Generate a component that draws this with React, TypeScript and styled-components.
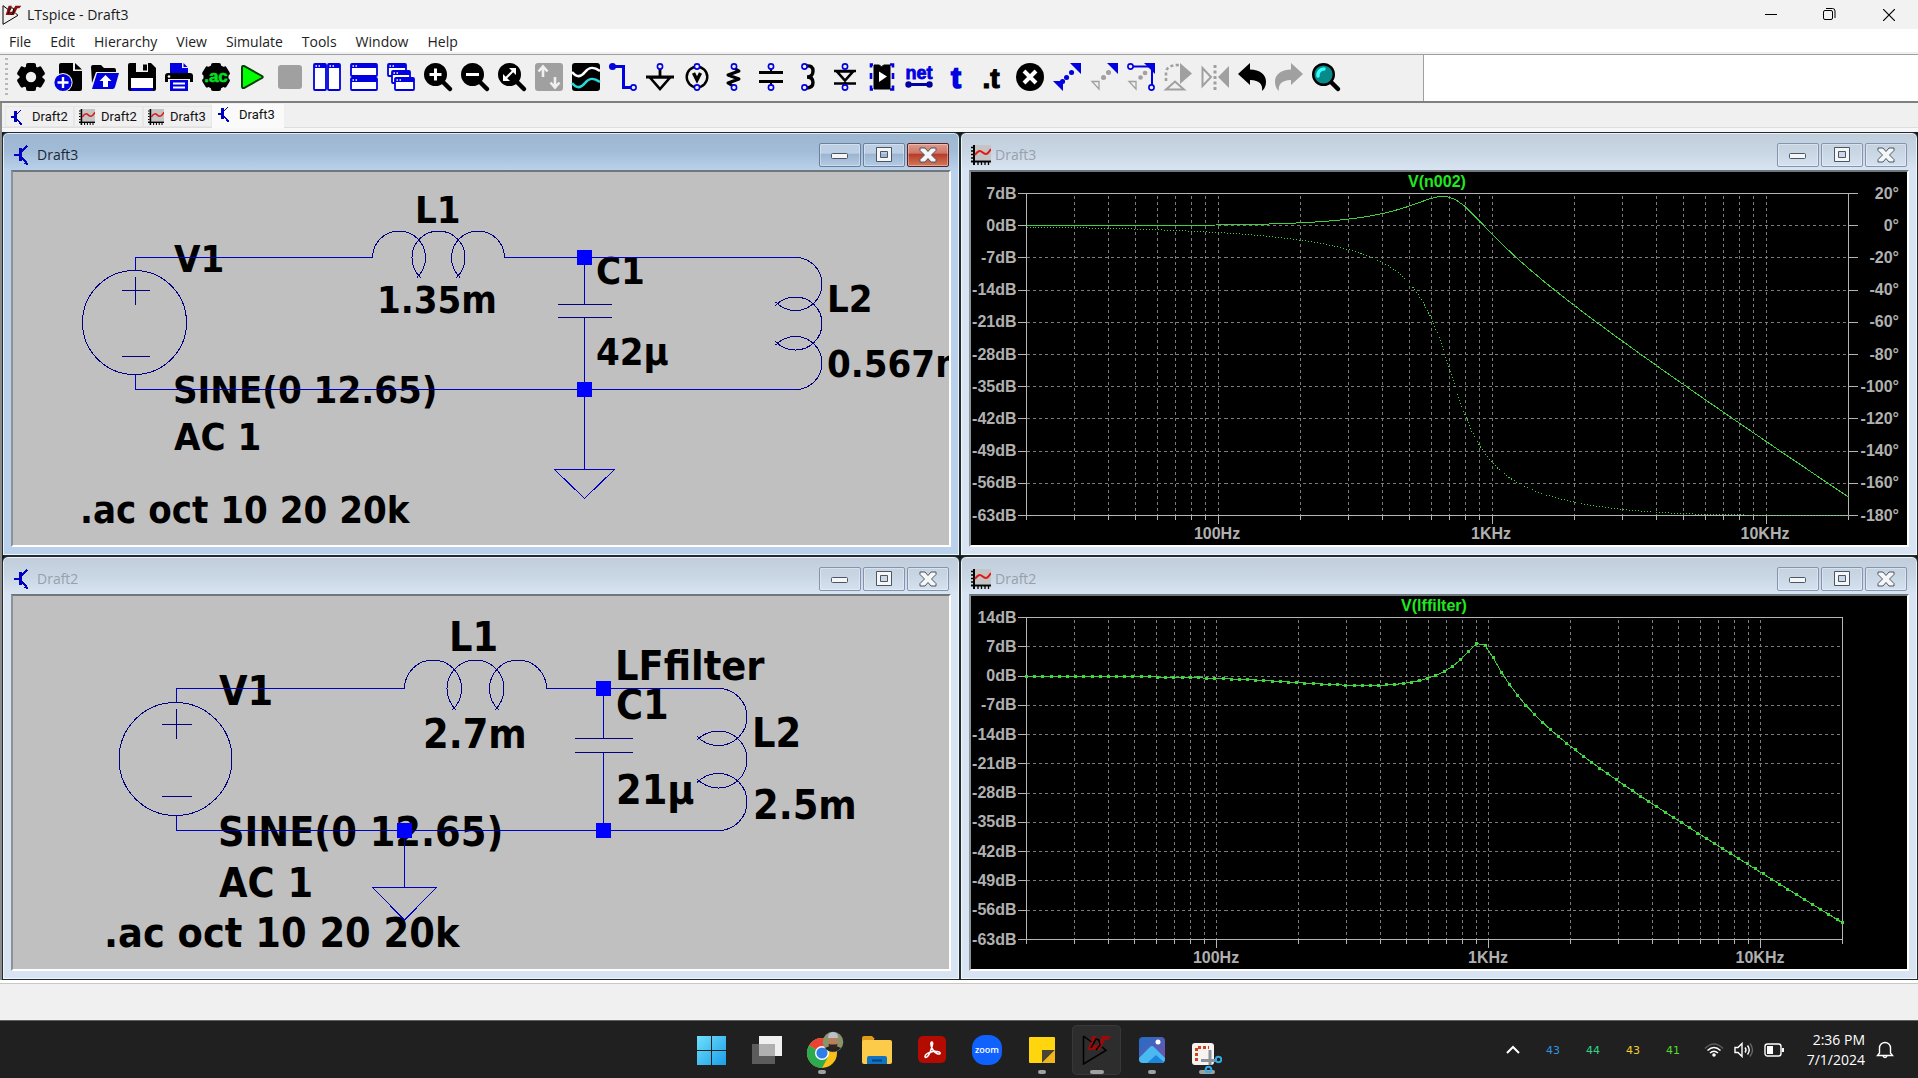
import React, { useLayoutEffect, useRef, useState } from "react";
import styled, { createGlobalStyle, css } from "styled-components";

const UI_FONT = `"Open Sans", "Noto Sans", sans-serif`;
const BLUE = "#0000e0";
const GREY = "#a0a0a0";

const GlobalStyle = createGlobalStyle`
  * { box-sizing: border-box; }
  body { margin: 0; background: #f0f0f0; font-family: ${UI_FONT}; font-size: 14px; }
  button { font: inherit; color: inherit; padding: 0; margin: 0; border: 0; background: none; }
  svg { display: block; }
`;

const Screen = styled.div`
  display: flex;
  flex-direction: column;
  min-height: 100vh;
  overflow: hidden;
`;

/* ---------- application caption and menu ---------- */

const Caption = styled.header`
  display: flex;
  align-items: center;
  height: 29px;
  padding-left: 2px;
  background: #f2f2f2;
  color: #1a1a1a;
`;

const CaptionTitle = styled.h1`
  flex: 1;
  margin: 0 0 0 5px;
  font-size: 14px;
  font-weight: 400;
  line-height: 20px;
`;

const CaptionButton = styled.button`
  display: grid;
  place-items: center;
  width: 59px;
  height: 28px;
`;

const MenuBar = styled.nav`
  display: flex;
  align-items: center;
  gap: 19px;
  height: 26px;
  padding-left: 9px;
  background: #fff;
  border-bottom: 1px solid #a0a0a0;
  box-shadow: inset 0 -2px 0 #f0f0f0;
  color: #222;
`;

const MenuItem = styled.button`
  height: 22px;
  line-height: 22px;
`;

/* ---------- toolbar ---------- */

const ToolRow = styled.div`
  display: flex;
  height: 48px;
  background: #fff;
  border-bottom: 2px solid #808080;
`;

const ToolBar = styled.div`
  display: flex;
  align-items: center;
  gap: 9px;
  padding: 0 83px 2px 5px;
  background: #f0f0f0;
  border-right: 1px solid #a0a0a0;
`;

const Grip = styled.div`
  width: 3px;
  height: 38px;
  background: repeating-linear-gradient(#b8b8b8 0 2px, transparent 2px 5px);
`;

const ToolButton = styled.button`
  width: 28px;
  height: 28px;
  svg { overflow: visible; }
`;

/* ---------- document tabs ---------- */

const TabStrip = styled.div`
  display: flex;
  align-items: flex-start;
  height: 29px;
  padding: 1px 0 0 3px;
  background: #f0f0f0;
  border-left: 2px solid #8c8c8c;
  box-shadow: inset 0 -4px 0 #f7f7f7, inset 0 -5px 0 #dedede;
  font-family: Roboto, "Open Sans", sans-serif;
  font-size: 13px;
`;

const Tab = styled.button<{ $active?: boolean }>`
  display: flex;
  align-items: center;
  gap: 6px;
  width: 69px;
  height: 21px;
  margin-top: 2px;
  padding-left: 4px;
  border: 1px solid #e6e6e6;
  color: #111;
  ${(p) =>
    p.$active &&
    css`
      width: 72px;
      height: 24px;
      margin-top: 0;
      padding-bottom: 4px;
      background: #fafafa;
      border-color: #fafafa;
    `}
`;

/* ---------- document windows ---------- */

const Workspace = styled.main`
  flex: 1;
  display: grid;
  grid-template-columns: minmax(0, 1fr) minmax(0, 1fr);
  grid-template-rows: minmax(0, 1fr) minmax(0, 1fr);
  min-height: 848px;
  padding-left: 2px;
  background: linear-gradient(90deg, #8c8c8c 0 2px, #101c1e 2px);
`;

const Frame = styled.section<{ $active?: boolean }>`
  display: flex;
  flex-direction: column;
  min-width: 0;
  padding: 0 8px 8px;
  border: 1px solid #1f2c30;
  border-radius: 6px 6px 0 0;
  box-shadow: inset 0 0 0 1px rgba(255, 255, 255, 0.7);
  background: ${(p) =>
    p.$active
      ? "linear-gradient(#9db6d1 0, #a2bbd7 18px, #b9d1ea 37px)"
      : "linear-gradient(#c1cddb 0, #c8d5e3 18px, #d8e4f1 37px)"};
`;

const FrameTitle = styled.div`
  display: flex;
  align-items: flex-start;
  gap: 2px;
  height: 37px;
  padding: 10px 2px 0 0;
`;

const FrameName = styled.h2<{ $active?: boolean }>`
  flex: 1;
  margin: 2px 0 0 2px;
  font-size: 14px;
  font-weight: 400;
  line-height: 20px;
  color: ${(p) => (p.$active ? "#1c2733" : "#98a1ab")};
`;

const FrameIcon = styled.span`
  margin: 2px 0 0 2px;
`;

const FrameButton = styled.button<{ $tone: "idle" | "active" | "danger" }>`
  display: grid;
  place-items: center;
  width: 42px;
  height: 24px;
  border: 1px solid #8494b0;
  border-radius: 2px;
  box-shadow: inset 0 0 0 1px rgba(255, 255, 255, 0.35);
  ${(p) =>
    p.$tone === "active" &&
    css`
      border-color: #6b809c;
      background: linear-gradient(#bccfe4 0 42%, #9bb5d1 46%, #b4cbe4);
    `}
  ${(p) =>
    p.$tone === "danger" &&
    css`
      border-color: #5b1f1f;
      background: linear-gradient(#dd9a8c 0, #cf7566 42%, #b83a26 46%, #d07a5c);
    `}
`;

const Client = styled.div<{ $dark?: boolean }>`
  flex: 1;
  min-height: 0;
  overflow: hidden;
  border: 2px solid #fff;
  border-top-color: #6f767c;
  border-left-color: #8b9299;
  background: ${(p) => (p.$dark ? "#000" : "#c0c0c0")};
`;

const Drawing = styled.svg`
  width: 100%;
  height: 100%;
  shape-rendering: crispEdges;
`;

const Label = styled.text`
  font-family: "DejaVu Sans Condensed", "DejaVu Sans", sans-serif;
  font-weight: 700;
  fill: #000;
`;

const AxisText = styled.text`
  font-family: "Liberation Sans", Arial, sans-serif;
  font-weight: 700;
  font-size: 16px;
  fill: #b0b0b0;
`;

const TraceName = styled(AxisText)`
  fill: #20e820;
`;

/* ---------- status bar and taskbar ---------- */

const StatusBar = styled.footer`
  height: 40px;
  background: #f0f0f0;
  border-top: 3px solid #fff;
  box-shadow: inset 0 1px 0 #c8c8c8;
`;

const TaskBar = styled.footer`
  display: grid;
  grid-template-columns: minmax(0, 1fr) auto minmax(0, 1fr);
  align-items: center;
  height: 58px;
  padding-top: 1px;
  background: #202020;
  border-top: 1px solid #606060;
  color: #fff;
`;

const Apps = styled.div`
  grid-column: 2;
  display: flex;
  gap: 6px;
`;

const AppButton = styled.button<{ $current?: boolean; $bar?: number }>`
  position: relative;
  display: grid;
  place-items: center;
  width: 49px;
  height: 50px;
  border-radius: 5px;
  background: ${(p) => (p.$current ? "#2d2d2d" : "transparent")};
  box-shadow: ${(p) => (p.$current ? "inset 0 0 0 1px #383838" : "none")};
  &::after {
    content: "";
    position: absolute;
    bottom: 1px;
    left: 50%;
    width: ${(p) => p.$bar ?? 0}px;
    height: 4px;
    border-radius: 2px;
    background: #a0a0a0;
    transform: translateX(-50%);
  }
  svg { position: relative; z-index: 1; }
`;

const Tray = styled.div`
  justify-self: end;
  display: flex;
  align-items: center;
  padding-right: 24px;
`;

const Gauges = styled.div`
  display: flex;
  gap: 26px;
  margin: 0 24px 0 26px;
  font-family: "DejaVu Sans", sans-serif;
  font-size: 11px;
`;

const Gauge = styled.span<{ $color: string }>`
  color: ${(p) => p.$color};
`;

const TrayIcons = styled.div`
  display: flex;
  align-items: center;
  gap: 10px;
`;

const Clock = styled.time`
  width: 71px;
  margin: 0 11px 0 10px;
  text-align: right;
  font-size: 14px;
  line-height: 20px;
  white-space: nowrap;
`;

/* ---------- toolbar icons, 28 x 28 ---------- */

const gearTeeth = [0, 60, 120].map((a) => (
  <rect key={a} x="9" y="0" width="10" height="28" rx="2" transform={`rotate(${a} 14 14)`} />
));

const Pin = ({ x, y }: { x: number; y: number }) => (
  <circle cx={x} cy={y} r="2.6" fill="#f0f0f0" stroke={BLUE} strokeWidth="1.6" />
);

const Lens = ({ children, fill = "#000" }: { children?: React.ReactNode; fill?: string }) => (
  <>
    <path d="M19 19 26 26" stroke="#000" strokeWidth="4.5" strokeLinecap="round" />
    <circle cx="11.5" cy="11.5" r="10.3" fill={fill} stroke="#000" strokeWidth="2.4" />
    {children}
  </>
);

const pane = (x: number, y: number, w: number, h: number) => (
  <g key={`${x}-${y}`}>
    <rect x={x + 1} y={y + 1} width={w - 2} height={h - 2} rx="1" fill="#fff" stroke={BLUE} strokeWidth="1.8" />
    <rect x={x + 1} y={y + 1} width={w - 2} height="4" fill={BLUE} />
    <path d={`M${x + 2.5} ${y + 3}h1.5M${x + 5.5} ${y + 3}h1.5`} stroke="#fff" strokeWidth="1.5" />
  </g>
);

const tools: { name: string; art: React.ReactNode }[] = [
  {
    name: "Settings",
    art: (
      <>
        <circle cx="14" cy="14" r="11.5" />
        {gearTeeth}
        <circle cx="14" cy="14" r="5.2" fill="#f0f0f0" />
      </>
    ),
  },
  {
    name: "New schematic",
    art: (
      <>
        <path d="M5 2q0-2 2-2h12v8h9v18q0 2-2 2H7q-2 0-2-2z" />
        <path d="M21 0l7 6.5h-7z" />
        <circle cx="9" cy="19.5" r="9.6" fill="#f0f0f0" />
        <circle cx="9" cy="19.5" r="8.6" fill={BLUE} />
        <path d="M9 14v11M3.500 19.500h11" stroke="#fff" strokeWidth="2.4" />
      </>
    ),
  },
  {
    name: "Open",
    art: (
      <>
        <path d="M0 4q0-2 2-2h8l3 3h10q2 0 2 2v2H5L1 20z" />
        <path d="M6 10h22l-4 14q-.5 2-2.500 2H1z" fill={BLUE} />
        <path d="M14.500 12l6 6h-3.500v6h-5v-6H8.500z" fill="#fff" />
      </>
    ),
  },
  {
    name: "Save",
    art: (
      <>
        <path d="M0 2q0-2 2-2h21l5 5v21q0 2-2 2H2q-2 0-2-2z" />
        <path d="M8 0h12v9H8z" fill="#f0f0f0" />
        <path d="M15 1.500h4v6h-4z" />
        <path d="M3 15h22v10H3z" fill="#fff" />
        <path d="M3 25h22v3H3z" fill={BLUE} />
      </>
    ),
  },
  {
    name: "Print",
    art: (
      <>
        <path d="M5 0h12v5h6v5H5z" fill={BLUE} />
        <path d="M18.500 0l4 4h-4z" fill={BLUE} />
        <path d="M0 13q0-3 3-3h22q3 0 3 3v6H0z" />
        <circle cx="4" cy="13.500" r="1.300" fill="#fff" />
        <path d="M3 16h22v3H3z" fill="#f0f0f0" />
        <path d="M5 17h18v11H5z" fill={BLUE} />
        <path d="M8 20.500h12M8 24.500h12" stroke="#fff" strokeWidth="1.800" />
      </>
    ),
  },
  {
    name: "Configure analysis",
    art: (
      <>
        <circle cx="14" cy="14" r="12.500" />
        {gearTeeth}
        <text x="14" y="19" textAnchor="middle" fontFamily="Liberation Sans" fontWeight="700" fontSize="17" fill="#00e020" stroke="#00e020" strokeWidth="0.600">
          .ac
        </text>
      </>
    ),
  },
  { name: "Run", art: <path d="M3 4.500q0-2 2-1.500l18 10q1.500 1 0 2L5 25q-2 .5-2-1.500z" fill="#0f0" stroke="#063a06" strokeWidth="2" /> },
  { name: "Stop", art: <rect x="2" y="2" width="24" height="24" rx="3" fill={GREY} /> },
  { name: "Tile vertically", art: <>{pane(0, 0, 14, 28)}{pane(14, 0, 14, 28)}</> },
  { name: "Tile horizontally", art: <>{pane(0, 0, 28, 14)}{pane(0, 14, 28, 14)}</> },
  { name: "Cascade", art: <>{pane(0, 0, 20, 14)}{pane(4, 7, 20, 14)}{pane(7, 14, 21, 14)}</> },
  { name: "Zoom in", art: <Lens><path d="M11.500 5.500v12M5.500 11.500h12" stroke="#fff" strokeWidth="3" /></Lens> },
  { name: "Zoom out", art: <Lens><path d="M5 11.500h13" stroke="#fff" strokeWidth="3" /></Lens> },
  {
    name: "Zoom to fit",
    art: (
      <Lens>
        <path d="M8 15l7-7" stroke="#fff" strokeWidth="2" />
        <path d="M11 5h7v7zM5 11v7h7z" fill="#fff" />
      </Lens>
    ),
  },
  {
    name: "Autorange",
    art: (
      <>
        <rect width="28" height="28" rx="3" fill={GREY} />
        <path d="M8 14V4M3.500 8.500 8 3.500l4.500 5M20 14v10M15.500 19.500l4.500 5 4.500-5" fill="none" stroke="#f0f0f0" strokeWidth="2.600" />
      </>
    ),
  },
  {
    name: "Plot settings",
    art: (
      <>
        <rect width="28" height="28" rx="3" />
        <path d="M0 9c5 6 9 5 13 0s8-6 15-1" fill="none" stroke="#fff" strokeWidth="2.600" />
        <path d="M0 20c5 6 9 5 13 0s8-6 15-1" fill="none" stroke="#28d8d8" strokeWidth="2.600" />
      </>
    ),
  },
  {
    name: "Wire",
    art: (
      <>
        <path d="M3 3.500h11.500v21H24" fill="none" stroke={BLUE} strokeWidth="3" />
        <circle cx="3.500" cy="3.500" r="3.500" fill={BLUE} />
        <Pin x={24.500} y={24.500} />
      </>
    ),
  },
  {
    name: "Ground",
    art: (
      <>
        <path d="M0 14h28M14 4v10" stroke="#000" strokeWidth="2.800" />
        <path d="M4 14.500h20L14 26z" fill="#f0f0f0" stroke="#000" strokeWidth="2.600" />
        <Pin x={14} y={3.500} />
      </>
    ),
  },
  {
    name: "Voltage source",
    art: (
      <>
        <circle cx="14" cy="14" r="10.300" fill="none" stroke="#000" strokeWidth="2.400" />
        <path d="M10.500 10l3.500 7 3.500-7" fill="none" stroke="#000" strokeWidth="3.400" />
        <Pin x={14} y={3.500} />
        <Pin x={14} y={24.500} />
      </>
    ),
  },
  {
    name: "Resistor",
    art: (
      <>
        <path d="M14 5l5 3-11 4 11 4-11 4 5 3" fill="none" stroke="#000" strokeWidth="3" strokeLinejoin="round" />
        <Pin x={14} y={3.500} />
        <Pin x={14} y={24.500} />
      </>
    ),
  },
  {
    name: "Capacitor",
    art: (
      <>
        <path d="M14 4v5M14 19v5" stroke="#000" strokeWidth="2" />
        <path d="M2 9.500h24M2 18.500h24" stroke="#000" strokeWidth="3" />
        <Pin x={14} y={3.500} />
        <Pin x={14} y={24.500} />
      </>
    ),
  },
  {
    name: "Inductor",
    art: (
      <>
        <path d="M12 3q7-1 7 5t-6 6q6 0 6 5.500T12 25" fill="none" stroke="#000" strokeWidth="3.400" />
        <Pin x={10.500} y={3.500} />
        <Pin x={10.500} y={24.500} />
      </>
    ),
  },
  {
    name: "Diode",
    art: (
      <>
        <path d="M3 8h22M3 20.500h22M14 19v5" stroke="#000" strokeWidth="2.600" />
        <path d="M6 8.500h16l-8 9z" fill="#f0f0f0" stroke="#000" strokeWidth="2.600" />
        <Pin x={14} y={3.500} />
        <Pin x={14} y={24.500} />
      </>
    ),
  },
  {
    name: "Component",
    art: (
      <>
        <path d="M6 2h5q2.500 3 5 0h6v24H6z" stroke="#000" strokeWidth="1" />
        <path d="M11 8.500l8 5-8 5.500z" fill="#fff" />
        <path d="M5 1.500H3v3M3 10v6M5 26.500H3v-4M22 1.500h3v3M25 10v6M22 26.500h3v-4" fill="none" stroke={BLUE} strokeWidth="2.600" />
      </>
    ),
  },
  {
    name: "Net name",
    art: (
      <>
        <text x="14" y="16" textAnchor="middle" fontFamily="Liberation Sans" fontWeight="700" fontSize="18" fill={BLUE} stroke={BLUE} strokeWidth="0.800">
          net
        </text>
        <path d="M2 21.500h24" stroke="#0000a0" strokeWidth="3" />
        <circle cx="3.500" cy="21.500" r="3.200" fill="#0000a0" />
        <circle cx="24.500" cy="21.500" r="3.200" fill="#0000a0" />
      </>
    ),
  },
  {
    name: "Text",
    art: (
      <text x="14" y="25" textAnchor="middle" fontFamily="Liberation Sans" fontWeight="700" fontSize="30" fill={BLUE} stroke={BLUE} strokeWidth="1.600">
        t
      </text>
    ),
  },
  {
    name: "SPICE directive",
    art: (
      <text x="12" y="25" textAnchor="middle" fontFamily="Liberation Sans" fontWeight="700" fontSize="28" stroke="#000" strokeWidth="1.200">
        .t
      </text>
    ),
  },
  {
    name: "Delete",
    art: (
      <>
        <circle cx="14" cy="14" r="14" />
        <path d="M8 8l12 12M20 8 8 20" stroke="#fff" strokeWidth="4" />
      </>
    ),
  },
  {
    name: "Move",
    art: (
      <>
        <path d="M17 0h11v11zM0 18h10v10z" fill={BLUE} />
        <path d="M13.500 14.500h.1M18.500 9.500h.1M9.500 18.500h.1" stroke={BLUE} strokeWidth="5" strokeLinecap="round" />
      </>
    ),
  },
  {
    name: "Drag",
    art: (
      <>
        <path d="M17 0h11v11z" fill={BLUE} />
        <path d="M2 18.500h7V26z" fill="none" stroke={GREY} strokeWidth="1.300" />
        <path d="M13.500 14.500h.1M18.500 9.500h.1" stroke={GREY} strokeWidth="5" strokeLinecap="round" />
      </>
    ),
  },
  {
    name: "Stretch",
    art: (
      <>
        <path d="M3 3.500h22V24" fill="none" stroke={BLUE} strokeWidth="2" />
        <path d="M17 0h11v11z" fill={BLUE} />
        <path d="M2 18.500h7V26z" fill="none" stroke={GREY} strokeWidth="1.300" />
        <path d="M13.500 14.500h.1M18 10h.1" stroke={GREY} strokeWidth="4.600" strokeLinecap="round" />
        <Pin x={3.500} y={3.500} />
        <Pin x={24.500} y={24.500} />
      </>
    ),
  },
  {
    name: "Rotate",
    art: (
      <>
        <path d="M2 18V10Q2 2 15 2" fill="none" stroke={GREY} strokeWidth="2.600" strokeDasharray="3 2.500" />
        <path d="M16 0l12 10.500L16 21z" fill={GREY} />
        <path d="M2 26.500h18l-9-8z" fill="#f0f0f0" stroke={GREY} strokeWidth="2" />
      </>
    ),
  },
  {
    name: "Mirror",
    art: (
      <>
        <path d="M1.500 5l8.500 9-8.500 9z" fill="none" stroke={GREY} strokeWidth="2" />
        <path d="M28 3v22L17 14z" fill={GREY} />
        <path d="M14 2v25" stroke={GREY} strokeWidth="3" strokeDasharray="3 2.500" />
      </>
    ),
  },
  { name: "Undo", art: <path d="M0 11 12 0v6.500c10 0 16 5 16 12 0 5-2 8-4 9.500 1-6-2-11-12-11V22z" /> },
  { name: "Redo", art: <path d="M28 11 16 0v6.500C6 6.500 0 11.500 0 18.500c0 5 2 8 4 9.500-1-6 2-11 12-11V22z" fill={GREY} /> },
  { name: "Find", art: <Lens fill="#078a8a"><path d="M6 13a6 6 0 0 1 6-7" fill="none" stroke="#3ff" strokeWidth="3.500" strokeLinecap="round" /></Lens> },
];

/* ---------- small document icons ---------- */

const SchematicIcon = ({ size }: { size: number }) => (
  <svg width={size} height={size} viewBox="0 0 20 20" shapeRendering="crispEdges">
    <path d="M1 10h6" stroke="#0000c0" strokeWidth="1.500" />
    <path d="M7 3v13" stroke="#0000c0" strokeWidth="3" />
    <path d="M7 8l7-7M8 12l6 6" stroke="#0000c0" strokeWidth="1.500" />
    <path d="M15 20l-5-1 4-4z" fill="#0000c0" />
  </svg>
);

const WaveIcon = ({ size }: { size: number }) => (
  <svg width={size} height={size} viewBox="0 0 20 20">
    <rect x="3" y="0" width="17" height="15" fill="#c4c4c4" />
    <path d="M3 0v20M0 16.500h20" stroke="#000" strokeWidth="2" />
    <path d="M0 2.500h2M0 6h2M0 9.500h2M0 13h2M7 17v3M10.500 17v3M14 17v3M17.500 17v3" stroke="#000" strokeWidth="1.300" />
    <path d="M4 10c2-3 3-4 5-4s3 3 6 3c2 0 3-2 5-5" fill="none" stroke="#e01818" strokeWidth="2" />
  </svg>
);

const LogoIcon = ({ size, fill = "#8a1010" }: { size: number; fill?: string }) => (
  <svg width={size} height={size} viewBox="0 0 30 30">
    <path d="M10 1h5l-4.500 9H15l5-9h9l-3 4h-3l-5 10H5.500z" fill={fill} />
    <path d="M1.500 1v28L24 15.500l-4-3.500M1.500 1l8 6M9 13l5-9 3 1 1 5-4 5" fill="none" stroke="#000" strokeWidth="1.500" />
  </svg>
);

/* ---------- schematics ---------- */

const WIRE = "#0000c0";
const SYMBOL = "#000080";

const Wires = ({ d }: { d: string }) => <path d={d} fill="none" stroke={WIRE} />;

const Node = ({ x, y }: { x: number; y: number }) => <rect x={x - 7.5} y={y - 7.5} width="15" height="15" fill="#00f" />;

const Source = ({ x, y, r, arm }: { x: number; y: number; r: number; arm: number }) => {
  const mark = Math.round(r * 0.62);
  return (
    <g fill="none" stroke={SYMBOL}>
      <circle cx={x - 1} cy={y} r={r} />
      <path d={`M${x - arm} ${y - mark}h${2 * arm}M${x} ${y - mark - arm}v${2 * arm}M${x - arm} ${y + mark + 2}h${2 * arm}`} />
    </g>
  );
};

const Coil = ({ x, y, r, pitch, vertical }: { x: number; y: number; r: number; pitch: number; vertical?: boolean }) => {
  const drop = r * 0.76;
  let d = "";
  for (let i = 0; i < 3; i++) {
    const left = i * pitch;
    const right = left + 2 * r;
    const tipBefore = r + (i - 0.5) * pitch;
    const tipAfter = tipBefore + pitch;
    d += i === 0 ? `M${left} 0` : `M${tipBefore + 2} ${drop}Q${left} ${r * 0.45} ${left} 0`;
    d += `A${r} ${r} 0 0 1 ${right} 0`;
    if (i < 2) d += `Q${right} ${r * 0.45} ${tipAfter - 2} ${drop}`;
  }
  return <path d={d} fill="none" stroke={SYMBOL} transform={`translate(${x} ${y})${vertical ? " rotate(90)" : ""}`} />;
};

const Plates = ({ x, y, half, gap }: { x: number; y: number; half: number; gap: number }) => (
  <path d={`M${x - half} ${y}h${2 * half}M${x - half} ${y + gap}h${2 * half}`} stroke={SYMBOL} />
);

const Labels = ({ size, items }: { size: number; items: [string, number, number][] }) => (
  <>
    {items.map(([text, x, y]) => (
      <Label key={text} x={x} y={y} fontSize={size}>
        {text}
      </Label>
    ))}
  </>
);

const Draft3Schematic = () => (
  <Drawing role="img" aria-label="Draft3 schematic">
    <Labels
      size={38}
      items={[
        ["L1", 402, 51], ["1.35m", 364, 141], ["V1", 161, 100], ["SINE(0 12.65)", 160, 231],
        ["AC 1", 161, 278], [".ac oct 10 20 20k", 67, 351], ["C1", 583, 112], ["42µ", 583, 193],
        ["L2", 814, 140], ["0.567m", 814, 205],
      ]}
    />
    <Source x={122.5} y={150.5} r={52} arm={14} />
    <Coil x={359.5} y={85.5} r={26.5} pitch={39.5} />
    <Coil x={782.5} y={85.5} r={26.5} pitch={39.5} vertical />
    <Plates x={571.5} y={132.5} half={27} gap={13} />
    <Wires d="M122.500 98V85.500H359.500M491.500 85.500H782.500M122.500 203V217.500H782.500M571.500 85V132M571.500 146V297M541.500 297.500H601.500L571.500 326.500Z" />
    <Node x={571.5} y={85.5} />
    <Node x={571.5} y={217.5} />
  </Drawing>
);

const Draft2Schematic = () => (
  <Drawing role="img" aria-label="Draft2 schematic">
    <Labels
      size={41}
      items={[
        ["L1", 436, 55], ["2.7m", 410, 152], ["V1", 206, 109], ["SINE(0 12.65)", 205, 250],
        ["AC 1", 206, 301], [".ac oct 10 20 20k", 91, 351], ["LFfilter", 602, 84], ["C1", 603, 123],
        ["21µ", 603, 208], ["L2", 739, 151], ["2.5m", 740, 223],
      ]}
    />
    <Source x={163.5} y={163} r={56.5} arm={15} />
    <Coil x={391.5} y={92.5} r={28.5} pitch={42.5} />
    <Coil x={705.5} y={92.5} r={28.5} pitch={42.5} vertical />
    <Plates x={590.5} y={142.5} half={29} gap={14} />
    <Wires d="M163.500 106V92.500H391.500M533.500 92.500H705.500M163.500 219V234.500H705.500M590.500 92V142M590.500 157V234M391.500 234V291M359.500 291.500H423.500L391.500 324Z" />
    <Node x={590.5} y={92.5} />
    <Node x={590.5} y={234.5} />
    <Node x={391.5} y={234.5} />
  </Drawing>
);

/* ---------- AC analysis plots ---------- */

type Filter = { l1: number; c: number; l2: number; load: number };

/* Response of L1 feeding C in parallel with (L2 + load). */
const response = (f: number, { l1, c, l2, load }: Filter) => {
  const w = 2 * Math.PI * f;
  const z2 = load * load + w * w * l2 * l2;
  const re = 1 - w * w * l1 * c + (w * w * l1 * l2) / z2;
  const im = (w * l1 * load) / z2;
  return { db: -10 * Math.log10(re * re + im * im), phase: (-Math.atan2(im, re) * 180) / Math.PI };
};

const F_MIN = 20;
const F_MAX = 20000;
const DECADES = Math.log10(F_MAX / F_MIN);

const samples: number[] = [];
for (let k = 0; F_MIN * 2 ** (k / 10) < F_MAX; k++) samples.push(F_MIN * 2 ** (k / 10));
samples.push(F_MAX);

const gridFrequencies: number[] = [];
for (const decade of [10, 100, 1000, 10000])
  for (let n = 1; n < 10; n++) if (n * decade > F_MIN && n * decade < F_MAX) gridFrequencies.push(n * decade);

const useSize = () => {
  const ref = useRef<SVGSVGElement>(null);
  const [size, setSize] = useState({ w: 936, h: 373 });
  useLayoutEffect(() => {
    const node = ref.current;
    if (!node) return;
    const read = () => {
      const box = node.getBoundingClientRect();
      setSize({ w: Math.round(box.width), h: Math.round(box.height) });
    };
    read();
    const observer = new ResizeObserver(read);
    observer.observe(node);
    return () => observer.disconnect();
  }, []);
  return { ref, size };
};

type PlotProps = { trace: string; filter: Filter; topDb: number; right: number; withPhase?: boolean; markers?: boolean };

const Plot = ({ trace, filter, topDb, right, withPhase, markers }: PlotProps) => {
  const { ref, size } = useSize();
  const x0 = 55.5;
  const x1 = size.w - right + 0.5;
  const y0 = 21.5;
  const y1 = size.h - 29.5;
  const rows = (topDb + 63) / 7;
  const step = (y1 - y0) / rows;
  const fx = (f: number) => x0 + (Math.log10(f / F_MIN) / DECADES) * (x1 - x0);
  const dbY = (db: number) => y0 + ((topDb - db) / 7) * step;
  const phaseY = (p: number) => y0 + ((20 - p) / 20) * step;
  const snap = (v: number) => Math.floor(v) + 0.5;
  const points = samples.map((f) => ({ x: fx(f), ...response(f, filter) }));
  const line = (y: (p: (typeof points)[number]) => number) => points.map((p) => `${p.x.toFixed(1)},${y(p).toFixed(1)}`).join(" ");

  return (
    <Drawing ref={ref} role="img" aria-label={`${trace} frequency response`}>
      <g stroke="#7c7c7c" strokeDasharray="3 3">
        {gridFrequencies.map((f) => (
          <line key={f} x1={snap(fx(f))} x2={snap(fx(f))} y1={y0 + 2} y2={y1} />
        ))}
        {Array.from({ length: rows - 1 }, (_, i) => (
          <line key={i} x1={x0} x2={x1 - 3} y1={snap(y0 + (i + 1) * step)} y2={snap(y0 + (i + 1) * step)} />
        ))}
      </g>
      <g stroke="#b4b4b4" fill="none">
        <rect x={x0} y={y0} width={Math.max(0, x1 - x0)} height={Math.max(0, y1 - y0)} />
        {Array.from({ length: rows + 1 }, (_, i) => {
          const y = snap(y0 + i * step);
          return <path key={i} d={`M${x0 - 9} ${y}h9${withPhase ? `M${x1} ${y}h9` : ""}`} />;
        })}
        {[F_MIN, ...gridFrequencies, F_MAX].map((f) => (
          <path key={f} d={`M${snap(fx(f))} ${y1}v${[100, 1000, 10000].includes(f) ? 8 : 4}`} />
        ))}
      </g>
      {Array.from({ length: rows + 1 }, (_, i) => (
        <AxisText key={i} x={x0 - 10} y={Math.round(y0 + i * step) + 5} textAnchor="end">
          {`${topDb - 7 * i}dB`}
        </AxisText>
      ))}
      {withPhase &&
        Array.from({ length: rows + 1 }, (_, i) => (
          <AxisText key={i} x={size.w - 8} y={Math.round(y0 + i * step) + 5} textAnchor="end">
            {`${20 - 20 * i}°`}
          </AxisText>
        ))}
      {[["100Hz", 100], ["1KHz", 1000], ["10KHz", 10000]].map(([text, f]) => (
        <AxisText key={text} x={Math.round(fx(Number(f))) - 1} y={y1 + 23} textAnchor="middle">
          {text}
        </AxisText>
      ))}
      <TraceName x={Math.round((x0 + x1) / 2) - 1} y={15} textAnchor="middle">
        {trace}
      </TraceName>
      <g fill="none" stroke="#3fd03f">
        <polyline points={line((p) => dbY(p.db))} />
        {withPhase && <polyline points={line((p) => phaseY(p.phase))} strokeDasharray="1 2" />}
      </g>
      {markers && points.map((p) => <rect key={p.x} x={Math.floor(p.x) - 1} y={Math.floor(dbY(p.db)) - 1} width="3" height="3" fill="#3fd83f" />)}
    </Drawing>
  );
};

/* ---------- document window ---------- */

const glyph = { fill: "#f4f6f8", stroke: "#4b5563", strokeWidth: 1 };

const DocumentWindow = ({ name, kind, active, children }: { name: string; kind: "schematic" | "plot"; active?: boolean; children: React.ReactNode }) => (
  <Frame $active={active} aria-label={`${name} ${kind}`}>
    <FrameTitle>
      <FrameIcon>{kind === "plot" ? <WaveIcon size={20} /> : <SchematicIcon size={20} />}</FrameIcon>
      <FrameName $active={active}>{name}</FrameName>
      <FrameButton $tone={active ? "active" : "idle"} aria-label="Minimize">
        <svg width="18" height="16"><rect x="0.5" y="6.500" width="16" height="5" rx="1" {...glyph} /></svg>
      </FrameButton>
      <FrameButton $tone={active ? "active" : "idle"} aria-label="Maximize">
        <svg width="18" height="16">
          <path fillRule="evenodd" d="M1.500.5h15v14h-15zM5.500 4.500v6h7v-6z" {...glyph} />
        </svg>
      </FrameButton>
      <FrameButton $tone={active ? "danger" : "idle"} aria-label="Close">
        <svg width="18" height="16">
          <path d="M1 1h5l3 3.500L12 1h5v2.500L12.500 8l4.500 4.500V15h-5l-3-3.500L6 15H1v-2.500L5.500 8 1 3.500z" {...glyph} />
        </svg>
      </FrameButton>
    </FrameTitle>
    <Client $dark={kind === "plot"}>{children}</Client>
  </Frame>
);

/* ---------- taskbar apps ---------- */

const apps: { name: string; bar?: number; current?: boolean; art: React.ReactNode }[] = [
  {
    name: "Start",
    art: (
      <svg width="30" height="30">
        <defs>
          <linearGradient id="win" x1="0" y1="0" x2="1" y2="1">
            <stop offset="0" stopColor="#6fe0fb" />
            <stop offset="1" stopColor="#1b9de8" />
          </linearGradient>
        </defs>
        <path d="M0 1h14v14H0zM15 1h14v14H15zM0 16h14v14H0zM15 16h14v14H15z" fill="url(#win)" />
      </svg>
    ),
  },
  {
    name: "Task view",
    art: (
      <svg width="30" height="30">
        <rect x="0" y="9" width="23" height="20" fill="#5c5c5c" />
        <rect x="7" y="1" width="23" height="20" fill="#f0f0f0" />
        <rect x="7" y="9" width="16" height="12" fill="#b0b0b0" />
      </svg>
    ),
  },
  {
    name: "Chrome",
    bar: 8,
    art: (
      <svg width="44" height="42" viewBox="0 0 44 42">
        <circle cx="22" cy="24" r="15" fill="#fbc116" />
        <path d="M22 24 9 16.500A15 15 0 0 1 35 16.500z" fill="#ea4335" />
        <path d="M22 24 9 16.500A15 15 0 0 0 22 39l6-11z" fill="#2da94f" />
        <circle cx="22" cy="24" r="7" fill="#fff" />
        <circle cx="22" cy="24" r="5.600" fill="#2f7de9" />
        <circle cx="33" cy="13" r="10.300" fill="#8a946a" />
        <path d="M25 19q8-5 16 0a10.300 10.300 0 0 1-16 0z" fill="#242424" />
        <ellipse cx="33" cy="12.500" rx="5" ry="7" fill="#b5805e" />
        <path d="M28 9q0-6 5-6t5 6z" fill="#b9c2cc" />
        <path d="M28.500 15q4.500 1 9 0-1 6-4.500 6t-4.500-6z" fill="#30241f" />
      </svg>
    ),
  },
  {
    name: "File Explorer",
    art: (
      <svg width="30" height="28">
        <path d="M0 2q0-2 2-2h8l3 3h-1v6H0z" fill="#e09a1a" />
        <rect x="0" y="4" width="30" height="24" rx="2" fill="#fdcb4a" />
        <path d="M5 28v-6q0-2 2-2h16q2 0 2 2v6z" fill="#1173c4" />
        <path d="M10 24.500h10" stroke="#0a3f78" strokeWidth="2" />
      </svg>
    ),
  },
  {
    name: "Acrobat",
    art: (
      <svg width="28" height="30">
        <rect y="1" width="28" height="27" rx="5" fill="#b30b00" />
        <path d="M14 7c-2 0-1 5 1 8s6 5 7 3.500-3-2.500-7-2-8 3-8 5 3 1 5-4 3.500-10.500 2-10.500z" fill="none" stroke="#fff" strokeWidth="1.600" />
      </svg>
    ),
  },
  {
    name: "Zoom",
    art: (
      <svg width="30" height="32">
        <rect y="1" width="30" height="30" rx="13" fill="#1062fe" />
        <text x="15" y="19" textAnchor="middle" fontFamily="Open Sans" fontWeight="600" fontSize="9" fill="#fff">
          zoom
        </text>
      </svg>
    ),
  },
  {
    name: "Sticky Notes",
    bar: 8,
    art: (
      <svg width="26" height="28">
        <rect y="1" width="26" height="26" rx="1" fill="#ffd60e" />
        <path d="M13 27V14h13z" fill="#4a4434" />
        <path d="M13 27 26 14v13z" fill="#f1b61e" />
      </svg>
    ),
  },
  { name: "LTspice", bar: 14, current: true, art: <LogoIcon size={30} fill="#960c0c" /> },
  {
    name: "Photos",
    bar: 8,
    art: (
      <svg width="26" height="28">
        <defs>
          <linearGradient id="sky" x1="0" y1="0" x2="1" y2="1">
            <stop offset="0" stopColor="#1f6fc9" />
            <stop offset="1" stopColor="#7a4fa8" />
          </linearGradient>
          <clipPath id="photo"><rect y="1" width="26" height="26" rx="4" /></clipPath>
        </defs>
        <g clipPath="url(#photo)">
          <rect width="26" height="28" fill="url(#sky)" />
          <path d="M0 22 11 11q2-2 4 0l11 11v6H0z" fill="#49b9f2" />
          <path d="M7 28l10-9 9 8v1z" fill="#1d86dc" />
          <circle cx="19" cy="6" r="2.500" fill="#fff" />
        </g>
      </svg>
    ),
  },
  {
    name: "Snipping Tool",
    bar: 16,
    art: (
      <svg width="30" height="46" viewBox="0 0 30 46">
        <rect y="16" width="22" height="22" rx="3" fill="#f6f2f0" />
        <path d="M4.500 34V20.500H17" fill="none" stroke="#d2401c" strokeWidth="3" strokeDasharray="3 2" />
        <path d="M18 23v15M9 33.500h16" stroke="#8b9299" strokeWidth="3" />
        <circle cx="26.500" cy="32.500" r="2.800" fill="none" stroke="#35a8e6" strokeWidth="2" />
        <circle cx="16.500" cy="42.500" r="2.800" fill="none" stroke="#35a8e6" strokeWidth="2" />
      </svg>
    ),
  },
];

const gauges: [string, string][] = [["43", "#3196dd"], ["44", "#2fd48a"], ["43", "#f0cf2c"], ["41", "#53dc2c"]];

const openTabs: { name: string; kind: "schematic" | "plot"; active?: boolean }[] = [
  { name: "Draft2", kind: "schematic" },
  { name: "Draft2", kind: "plot" },
  { name: "Draft3", kind: "plot" },
  { name: "Draft3", kind: "schematic", active: true },
];

const App = () => (
  <Screen>
    <GlobalStyle />
    <Caption>
      <LogoIcon size={20} />
      <CaptionTitle>LTspice - Draft3</CaptionTitle>
      <CaptionButton aria-label="Minimize">
        <svg width="12" height="12"><path d="M0 5.500h12" stroke="#000" /></svg>
      </CaptionButton>
      <CaptionButton aria-label="Restore">
        <svg width="13" height="13" fill="none" stroke="#000">
          <rect x="0.500" y="2.500" width="9" height="9" rx="1.500" />
          <path d="M3 .5h6.500q2.500 0 2.500 2.500V10" />
        </svg>
      </CaptionButton>
      <CaptionButton aria-label="Close">
        <svg width="12" height="12"><path d="M0 0l12 12M12 0 0 12" stroke="#000" strokeWidth="1.200" /></svg>
      </CaptionButton>
    </Caption>
    <MenuBar aria-label="Menu">
      {["File", "Edit", "Hierarchy", "View", "Simulate", "Tools", "Window", "Help"].map((item) => (
        <MenuItem key={item}>{item}</MenuItem>
      ))}
    </MenuBar>
    <ToolRow>
      <ToolBar role="toolbar" aria-label="Tools">
        <Grip />
        {tools.map((tool) => (
          <ToolButton key={tool.name} aria-label={tool.name} title={tool.name}>
            <svg width="28" height="28" viewBox="0 0 28 28">{tool.art}</svg>
          </ToolButton>
        ))}
      </ToolBar>
    </ToolRow>
    <TabStrip>
      {openTabs.map((tab) => (
        <Tab key={tab.name + tab.kind} $active={tab.active}>
          {tab.kind === "plot" ? <WaveIcon size={16} /> : <SchematicIcon size={16} />}
          {tab.name}
        </Tab>
      ))}
    </TabStrip>
    <Workspace>
      <DocumentWindow name="Draft3" kind="schematic" active>
        <Draft3Schematic />
      </DocumentWindow>
      <DocumentWindow name="Draft3" kind="plot">
        <Plot trace="V(n002)" filter={{ l1: 0.00135, c: 0.000042, l2: 0.000567, load: 11.6 }} topDb={7} right={59} withPhase />
      </DocumentWindow>
      <DocumentWindow name="Draft2" kind="schematic">
        <Draft2Schematic />
      </DocumentWindow>
      <DocumentWindow name="Draft2" kind="plot">
        <Plot trace="V(lffilter)" filter={{ l1: 0.0027, c: 0.000021, l2: 0.0025, load: 6.4 }} topDb={14} right={65} markers />
      </DocumentWindow>
    </Workspace>
    <StatusBar />
    <TaskBar>
      <Apps>
        {apps.map((app) => (
          <AppButton key={app.name} aria-label={app.name} $current={app.current} $bar={app.bar}>
            {app.art}
          </AppButton>
        ))}
      </Apps>
      <Tray>
        <button aria-label="Show hidden icons">
          <svg width="14" height="10"><path d="M1 8l6-6 6 6" fill="none" stroke="#fff" strokeWidth="2" /></svg>
        </button>
        <Gauges>
          {gauges.map(([value, color]) => (
            <Gauge key={color} $color={color}>{value}</Gauge>
          ))}
        </Gauges>
        <TrayIcons>
          <svg width="20" height="16" fill="none" strokeWidth="1.600">
            <path d="M1 6.500q9-9 18 0" stroke="#5c5c5c" />
            <path d="M3.500 8.500q6.500-6 13 0M6 11q4-3.500 8 0" stroke="#fff" />
            <circle cx="10" cy="13" r="1.800" fill="#fff" />
          </svg>
          <svg width="20" height="16" fill="none" stroke="#fff" strokeWidth="1.400">
            <path d="M1 5.500h3l4-4v13l-4-4H1z" />
            <path d="M11 5.500q2 2.500 0 5M13.500 3.500q3.500 4.500 0 9" />
            <path d="M16 1.500q5 6.500 0 13" stroke="#666" />
          </svg>
          <svg width="20" height="16" fill="none" stroke="#fff" strokeWidth="1.400">
            <rect x="1" y="2" width="16" height="12" rx="2.500" />
            <rect x="3" y="4" width="6" height="8" fill="#fff" stroke="none" />
            <path d="M19 6v4" strokeWidth="2" />
          </svg>
        </TrayIcons>
        <Clock>
          2:36 PM
          <br />
          7/1/2024
        </Clock>
        <svg width="18" height="20" fill="none" stroke="#fff" strokeWidth="1.400">
          <path d="M3.500 13V8a5.500 5.500 0 0 1 11 0v5l2 2.500h-15z" />
          <path d="M7 16q2 3 4 0" />
        </svg>
      </Tray>
    </TaskBar>
  </Screen>
);

export default App;
